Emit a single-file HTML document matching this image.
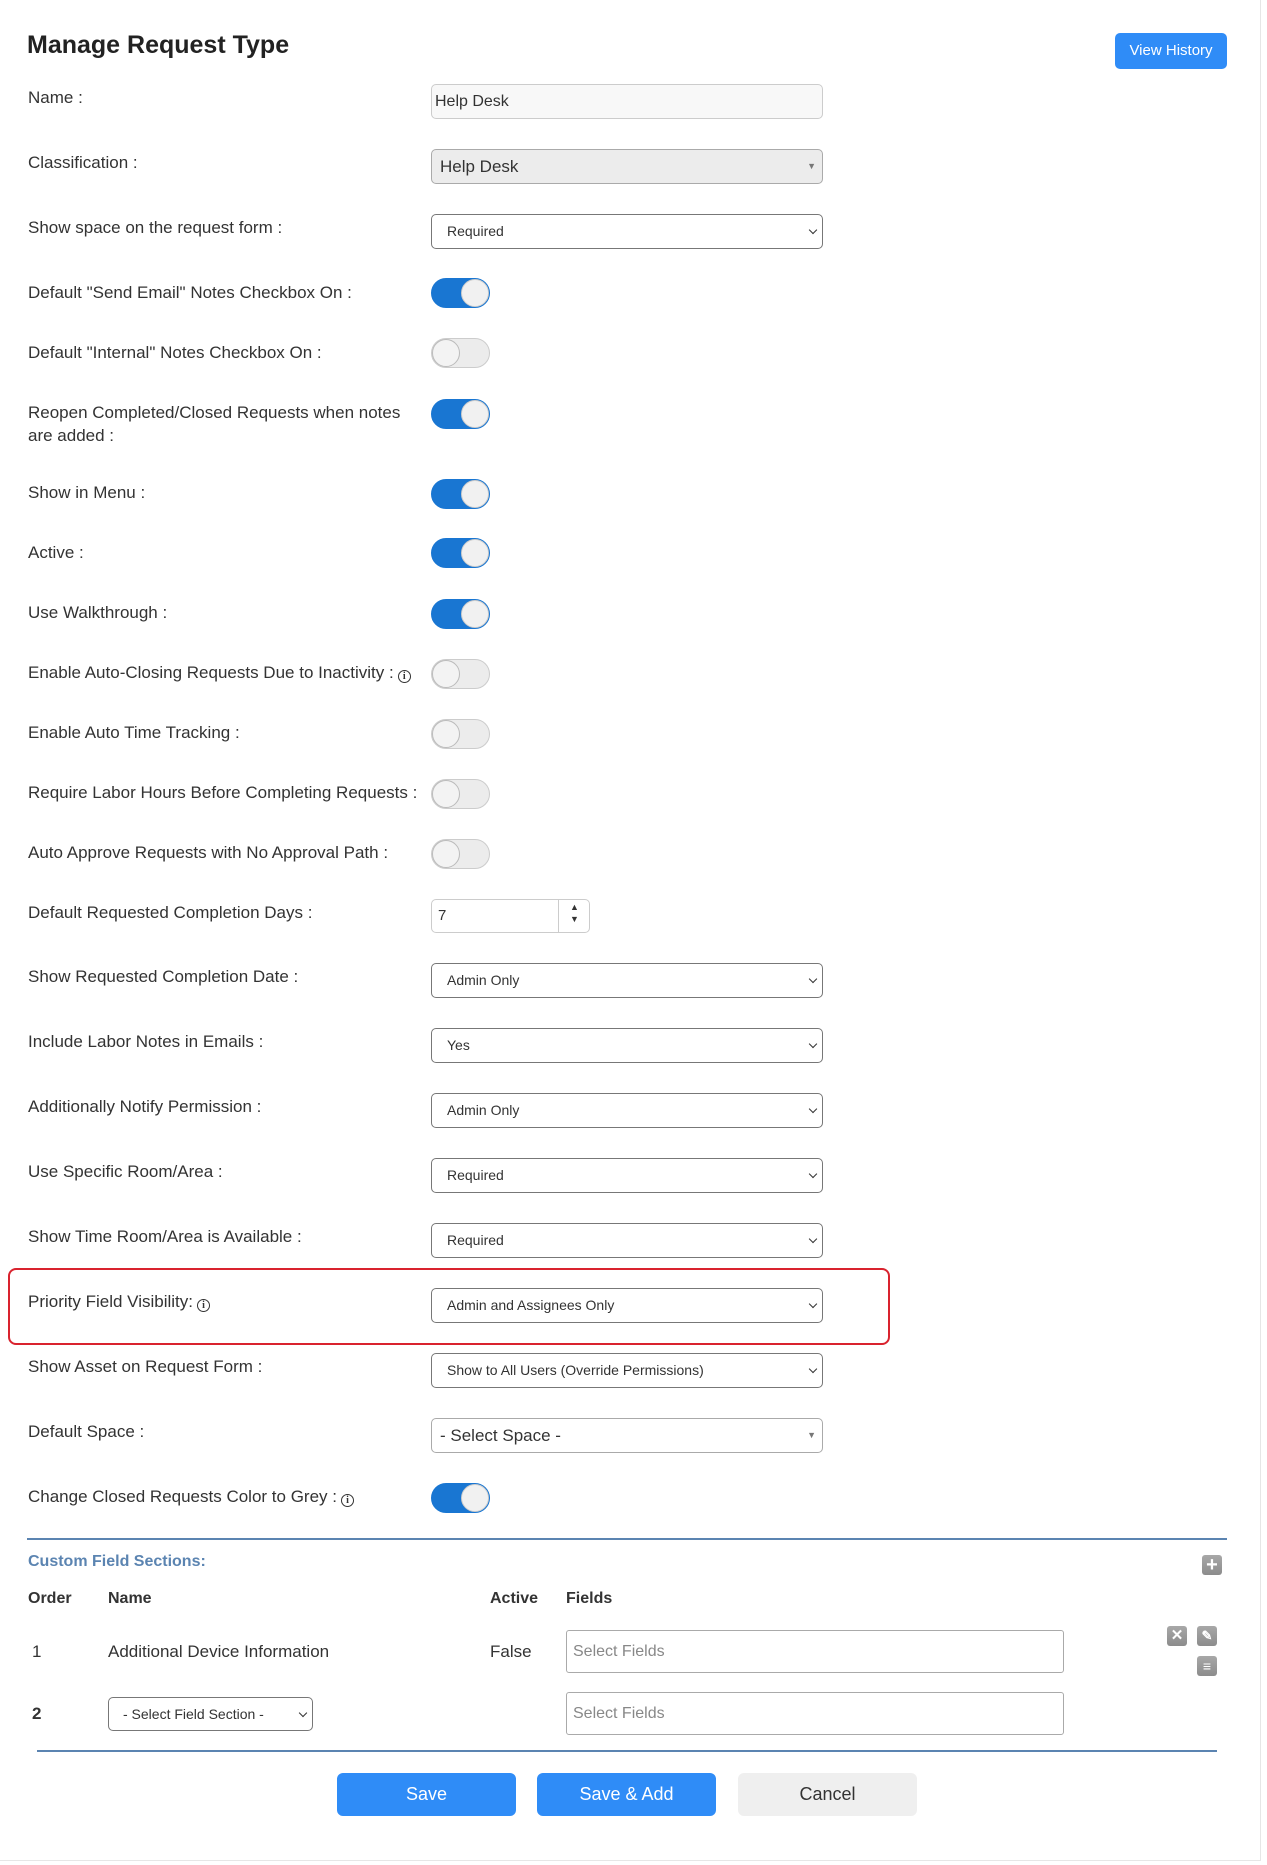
<!DOCTYPE html>
<html><head><meta charset="utf-8"><style>
*{box-sizing:border-box;margin:0;padding:0}
body{width:1267px;height:1865px;background:#fff;font-family:"Liberation Sans",Arial,sans-serif;color:#333;position:relative;overflow:hidden}
.a{position:absolute}
.edge{left:1260px;top:0;width:1px;height:1860px;background:#e6e6e6}
.bot{left:0;top:1860px;width:1261px;height:1px;background:#e6e6e6}
h1{position:absolute;left:27px;top:31px;font-size:25px;font-weight:bold;color:#222}
.lbl{position:absolute;left:28px;font-size:17px;color:#333;line-height:23px;margin-top:2px}
.inp{position:absolute;left:431px;width:392px;height:35px;border:1px solid #ccc;border-radius:5px;font-size:16px;padding:0 3px;line-height:33px;background:#f8f8f8}
.cls{background:#ececec;border-color:#aaa;padding-left:8px;font-size:17px}
.sel{position:absolute;left:431px;width:392px;height:35px;border:1px solid #777;border-radius:5px;font-size:14px;padding-left:15px;line-height:33px;background:#fff;color:#333}
.sel:after{content:"";position:absolute;right:6px;top:12px;width:5px;height:5px;border-right:1.5px solid #333;border-bottom:1.5px solid #333;transform:rotate(45deg)}
.tg{position:absolute;left:431px;width:59px;height:30px;border-radius:15px;background:#ececec;border:1px solid #ccc}
.tg:after{content:"";position:absolute;left:0;top:0;width:28px;height:28px;border-radius:50%;background:#f3f3f3;border:1px solid #bbb;box-sizing:border-box}
.tg.on{background:#1976d2;border-color:#1976d2}
.tg.on:after{left:29px;background:#f1f1f1;border-color:#ccc}
.info{display:inline-block;width:13px;height:13px;border:1.3px solid #333;border-radius:50%;font-size:10px;line-height:11px;text-align:center;font-weight:bold;vertical-align:-1px;margin-left:4px;font-family:"Liberation Serif",serif}
.btn{position:absolute;top:1773px;width:179px;height:43px;border-radius:6px;font-size:18px;text-align:center;line-height:43px;color:#fff;background:#2f8cf7}
.ic{position:absolute;width:20px;height:20px;border-radius:3px;background:linear-gradient(#a8a8a8,#8c8c8c);color:#fff;text-align:center;font-weight:bold;font-size:15px;line-height:20px}
.fld{position:absolute;left:566px;width:498px;height:43px;border:1px solid #aaa;border-radius:3px;font-size:16px;color:#888;padding-left:6px;line-height:41px}
.th{position:absolute;top:1590px;font-size:16px;font-weight:bold;color:#333}
</style></head><body>
<div class="a edge"></div><div class="a bot"></div>
<h1>Manage Request Type</h1>
<div class="a" style="left:1115px;top:33px;width:112px;height:36px;background:#2f8cf7;border-radius:5px;color:#fff;font-size:15px;text-align:center;line-height:36px">View History</div>

<div class="lbl" style="top:84px">Name :</div>
<div class="inp" style="top:84px">Help Desk</div>
<div class="lbl" style="top:149px">Classification :</div>
<div class="inp cls" style="top:149px">Help Desk<span style="position:absolute;right:6px;top:0;font-size:9px;color:#777">▼</span></div>
<div class="lbl" style="top:214px">Show space on the request form :</div>
<div class="sel" style="top:214px">Required</div>

<div class="lbl" style="top:279px">Default "Send Email" Notes Checkbox On :</div><div class="tg on" style="top:278px"></div>
<div class="lbl" style="top:339px">Default "Internal" Notes Checkbox On :</div><div class="tg" style="top:338px"></div>
<div class="lbl" style="top:399px">Reopen Completed/Closed Requests when notes<br>are added :</div><div class="tg on" style="top:399px"></div>
<div class="lbl" style="top:479px">Show in Menu :</div><div class="tg on" style="top:479px"></div>
<div class="lbl" style="top:539px">Active :</div><div class="tg on" style="top:538px"></div>
<div class="lbl" style="top:599px">Use Walkthrough :</div><div class="tg on" style="top:599px"></div>
<div class="lbl" style="top:659px">Enable Auto-Closing Requests Due to Inactivity :<span class="info">i</span></div><div class="tg" style="top:659px"></div>
<div class="lbl" style="top:719px">Enable Auto Time Tracking :</div><div class="tg" style="top:719px"></div>
<div class="lbl" style="top:779px">Require Labor Hours Before Completing Requests :</div><div class="tg" style="top:779px"></div>
<div class="lbl" style="top:839px">Auto Approve Requests with No Approval Path :</div><div class="tg" style="top:839px"></div>

<div class="lbl" style="top:899px">Default Requested Completion Days :</div>
<div class="a" style="left:431px;top:899px;width:159px;height:34px;border:1px solid #ccc;border-radius:5px;font-size:15px;line-height:32px;padding-left:6px">7<div class="a" style="left:126px;top:0;width:1px;height:32px;background:#ccc"></div><div class="a" style="left:138px;top:1px;font-size:9px;line-height:12px">▲<br>▼</div></div>

<div class="lbl" style="top:963px">Show Requested Completion Date :</div><div class="sel" style="top:963px">Admin Only</div>
<div class="lbl" style="top:1028px">Include Labor Notes in Emails :</div><div class="sel" style="top:1028px">Yes</div>
<div class="lbl" style="top:1093px">Additionally Notify Permission :</div><div class="sel" style="top:1093px">Admin Only</div>
<div class="lbl" style="top:1158px">Use Specific Room/Area :</div><div class="sel" style="top:1158px">Required</div>
<div class="lbl" style="top:1223px">Show Time Room/Area is Available :</div><div class="sel" style="top:1223px">Required</div>
<div class="a" style="left:8px;top:1268px;width:882px;height:77px;border:2px solid #d9232e;border-radius:8px"></div>
<div class="lbl" style="top:1288px">Priority Field Visibility:<span class="info">i</span></div><div class="sel" style="top:1288px">Admin and Assignees Only</div>
<div class="lbl" style="top:1353px">Show Asset on Request Form :</div><div class="sel" style="top:1353px">Show to All Users (Override Permissions)</div>
<div class="lbl" style="top:1418px">Default Space :</div>
<div class="inp" style="top:1418px;background:#fff;border-color:#aaa;padding-left:8px;font-size:17px">- Select Space -<span style="position:absolute;right:6px;top:0;font-size:9px;color:#777">▼</span></div>
<div class="lbl" style="top:1483px">Change Closed Requests Color to Grey :<span class="info">i</span></div><div class="tg on" style="top:1483px"></div>

<div class="a" style="left:27px;top:1538px;width:1200px;height:2px;background:#5b84b1"></div>
<div class="a" style="left:28px;top:1553px;font-size:16px;font-weight:bold;color:#5b84b1">Custom Field Sections:</div>
<div class="ic" style="left:1202px;top:1555px;font-size:20px">+</div>
<div class="th" style="left:28px">Order</div><div class="th" style="left:108px">Name</div><div class="th" style="left:490px">Active</div><div class="th" style="left:566px">Fields</div>
<div class="a" style="left:32px;top:1642px;font-size:17px">1</div>
<div class="a" style="left:108px;top:1642px;font-size:17px">Additional Device Information</div>
<div class="a" style="left:490px;top:1642px;font-size:17px">False</div>
<div class="fld" style="top:1630px">Select Fields</div>
<div class="ic" style="left:1167px;top:1626px">✕</div>
<div class="ic" style="left:1197px;top:1626px;font-size:13px">✎</div>
<div class="ic" style="left:1197px;top:1656px;font-size:14px">≡</div>
<div class="a" style="left:32px;top:1704px;font-size:17px;font-weight:bold">2</div>
<div class="sel" style="left:108px;top:1697px;width:205px;height:34px;font-size:14px;padding-left:14px;line-height:32px">- Select Field Section -</div>
<div class="fld" style="top:1692px">Select Fields</div>
<div class="a" style="left:37px;top:1750px;width:1180px;height:2px;background:#5b84b1"></div>

<div class="btn" style="left:337px">Save</div>
<div class="btn" style="left:537px">Save &amp; Add</div>
<div class="btn" style="left:738px;background:#efefef;color:#333">Cancel</div>
</body></html>
